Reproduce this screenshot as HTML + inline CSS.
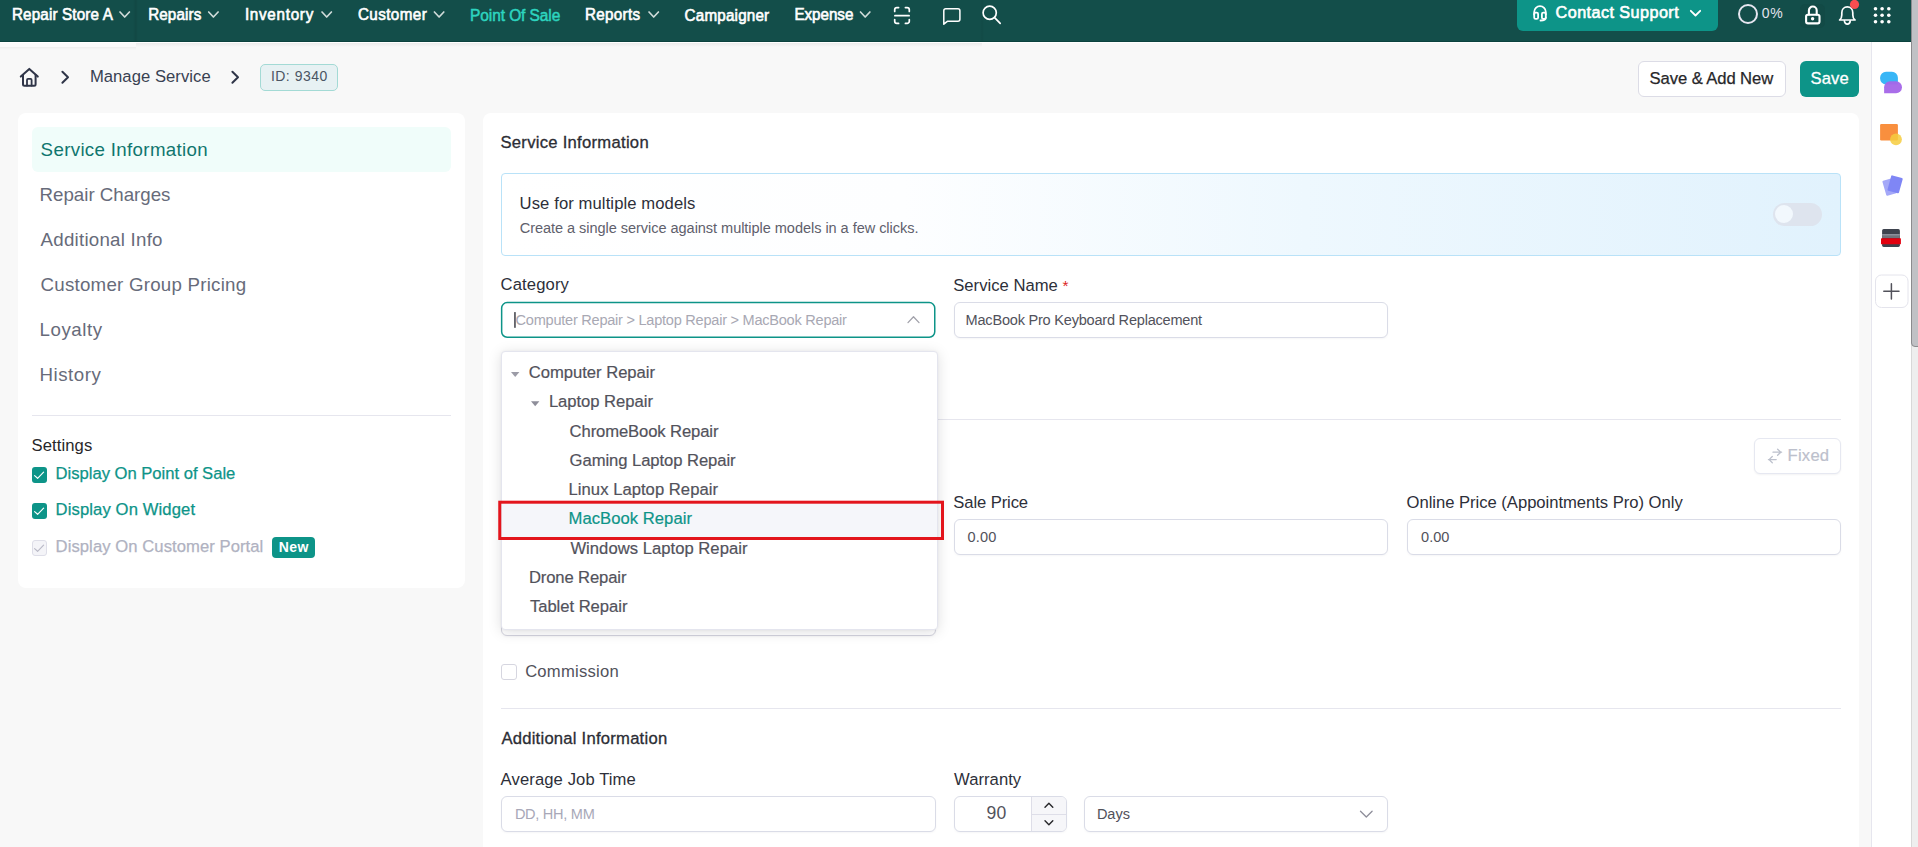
<!DOCTYPE html>
<html lang="en">
<head>
<meta charset="utf-8">
<title>Manage Service</title>
<style>
*{box-sizing:border-box;margin:0;padding:0}
html,body{width:1918px;height:847px;overflow:hidden;background:#f8f8f8;font-family:"Liberation Sans",sans-serif;}
body{position:relative}
.a{position:absolute}
.t{position:absolute;white-space:nowrap;line-height:20px;}
.nav{left:0;top:0;width:1911px;height:42px;background:#134e4a}
.cs{left:1517px;top:-6px;width:201px;height:37px;border-radius:6px;background:#0d9488}
.rp{left:1871px;top:42px;width:40px;height:805px;background:#fff;border-left:1px solid #e6e6ee}
.sbtrack{left:1911px;top:0;width:7px;height:847px;background:#eeeeee;border-left:1px solid #d8d8d8}
.sbthumb{left:1911px;top:-4px;width:11px;height:350.500px;background:#c0c1c5;border:1px solid #8b8b8e;border-radius:4px}
.card{background:#fff;border-radius:8px}
.inp{background:#fff;border:1px solid #dadce7;border-radius:6px;box-shadow:0 1px 2px rgba(24,24,40,.04)}
.hr{height:1px;background:#e6e6ee}
.cb{width:15px;height:16px;border-radius:3px}
</style>
</head>
<body>
<!-- top navigation -->
<div class="a nav"></div>
<div class="a" style="left:0;top:41px;width:1911px;height:1px;background:#0b423e"></div>
<div class="a" style="left:133px;top:0;width:5px;height:41px;background:linear-gradient(90deg,rgba(0,0,0,0),rgba(0,0,0,.08) 55%,rgba(0,0,0,0))"></div>
<div class="a" style="left:0;top:42px;width:1871px;height:1px;background:#fff"></div>
<div class="a" style="left:136px;top:43px;width:846px;height:4px;background:linear-gradient(180deg,rgba(0,0,0,.05),rgba(0,0,0,0))"></div>
<div class="a" style="left:980px;top:0;width:4px;height:41px;background:linear-gradient(90deg,rgba(0,0,0,0),rgba(0,0,0,.05) 50%,rgba(0,0,0,0))"></div>
<div class="a" style="left:0;top:43px;width:136px;height:4px;background:#fafafa"></div>
<div class="a" style="left:0;top:47px;width:136px;height:3px;background:linear-gradient(180deg,rgba(0,0,0,.045),rgba(0,0,0,0))"></div>
<div class="a cs"></div>
<svg class="a" style="left:0;top:0" width="1911" height="42" viewBox="0 0 1911 42" fill="none" stroke-linecap="round" stroke-linejoin="round">
  <!-- nav chevrons -->
  <g stroke="#cfdbd9" stroke-width="1.7">
    <path d="M120 12l4.7 5 4.7-5"/>
    <path d="M208.7 12l4.7 5 4.7-5"/>
    <path d="M322 12l4.7 5 4.7-5"/>
    <path d="M434.4 12l4.7 5 4.7-5"/>
    <path d="M649 12l4.7 5 4.7-5"/>
    <path d="M860.5 12l4.7 5 4.7-5"/>
  </g>
  <!-- scan icon -->
  <g stroke="#fff" stroke-width="1.7">
    <path d="M894.7 11.5v-1.7a2.2 2.2 0 0 1 2.2-2.2h1.7M905.4 7.6h1.7a2.2 2.2 0 0 1 2.2 2.2v1.7M909.3 19.5v1.7a2.2 2.2 0 0 1-2.2 2.2h-1.7M898.6 23.4h-1.7a2.2 2.2 0 0 1-2.2-2.2v-1.7M894.9 15.7h14.2"/>
  </g>
  <!-- chat icon -->
  <path d="M943.8 24.2V10.8a2 2 0 0 1 2-2h12.1a2 2 0 0 1 2 2v8.5a2 2 0 0 1-2 2h-10.6z" stroke="#fff" stroke-width="1.5"/>
  <!-- search icon -->
  <g stroke="#fff" stroke-width="1.7"><circle cx="989.7" cy="12.8" r="6.6"/><path d="M994.6 17.6l5.6 5.7"/></g>
  <!-- headset -->
  <g stroke="#fff" stroke-width="1.8">
    <path d="M1534.2 14.5v-2.6a5.8 5.8 0 0 1 11.6 0v2.6"/>
    <rect x="1534.2" y="12.6" width="3.9" height="6.2" rx="1.4"/>
    <rect x="1541.9" y="12.6" width="3.9" height="6.2" rx="1.4"/>
    <path d="M1545.8 17.5c0 2-1.8 3-5.3 3"/>
  </g>
  <!-- contact chevron -->
  <path d="M1690.8 10.8l4.7 4.7 4.7-4.7" stroke="#fff" stroke-width="1.8"/>
  <!-- progress circle -->
  <circle cx="1748" cy="14" r="9" stroke="#e6e6f0" stroke-width="2"/>
  <!-- lock -->
  <rect x="1800" y="4" width="25" height="24" rx="5" fill="#124a46" stroke="none"/>
  <g stroke="#fff" stroke-width="2.1">
    <rect x="1806.1" y="14.7" width="13.4" height="8.7" rx="1.8"/>
    <path d="M1808.9 14.5v-4.1a3.9 3.9 0 0 1 7.8 0v4.1"/>
  </g>
  <circle cx="1812.6" cy="18.8" r="1.7" fill="#fff"/>
  <!-- bell -->
  <g stroke="#fff" stroke-width="1.7">
    <path d="M1839.6 20h15.4c-1.5-1.1-2.2-2.5-2.2-5v-2.2c0-3.300-2.300-5.900-5.500-5.900s-5.500 2.600-5.500 5.900v2.200c0 2.500-.7 3.900-2.200 5z"/>
    <path d="M1844.400 20.800a2.900 3.300 0 0 0 5.800 0"/>
  </g>
  <circle cx="1854.500" cy="4.400" r="4.600" fill="#fa4d50"/>
  <!-- app grid -->
  <g fill="#fff">
    <circle cx="1875.500" cy="8.700" r="1.800"/><circle cx="1882.100" cy="8.700" r="1.800"/><circle cx="1888.800" cy="8.700" r="1.800"/>
    <circle cx="1875.500" cy="15.200" r="1.800"/><circle cx="1882.100" cy="15.200" r="1.800"/><circle cx="1888.800" cy="15.200" r="1.800"/>
    <circle cx="1875.500" cy="21.800" r="1.800"/><circle cx="1882.100" cy="21.800" r="1.800"/><circle cx="1888.800" cy="21.800" r="1.800"/>
  </g>
</svg>

<!-- right app rail -->
<div class="a rp"></div>
<svg class="a" style="left:1871px;top:42px" width="40" height="320" viewBox="1871 42 40 320" fill="none">
  <path d="M1886.100 71.800h5.800a6 6 0 0 1 6 6v6.600h-11.800a6 6 0 0 1-6-6v-.6a6 6 0 0 1 6-6z" fill="#38b6f6"/>
  <path d="M1884.100 87.300a6 6 0 0 1 6-6h5.900a6 6 0 0 1 6 6v0a6 6 0 0 1-6 6h-11.900z" fill="#a667e8" fill-opacity=".96"/>
  <rect x="1880.100" y="124" width="17.800" height="16.400" rx="1.200" fill="#f98f3e"/>
  <circle cx="1896" cy="139.300" r="5.900" fill="#f6cd3e" fill-opacity=".85"/>
  <rect x="1884.150" y="179.100" width="11" height="15.700" rx="1" fill="#a4a8f8" transform="rotate(-16 1889.650 186.950)"/>
  <rect x="1889.150" y="176.450" width="11.900" height="15.800" rx="1" fill="#7f86f5" transform="rotate(15.500 1895.100 184.350)"/>
  <rect x="1882.100" y="229.100" width="17.800" height="17.800" rx="1.600" fill="#3e434e"/>
  <rect x="1882.100" y="234.100" width="17.800" height="3.900" fill="#6f737c"/>
  <rect x="1882.100" y="234.100" width="17.800" height="1.300" fill="#9093a0"/>
  <rect x="1881" y="238.200" width="19.900" height="6.100" rx=".6" fill="#e2000f"/>
  <rect x="1875.500" y="275" width="32.500" height="32.500" rx="6" fill="#fff" stroke="#e4e4ec"/>
  <path d="M1883.800 291.300h15.200M1891.400 283.700v15.200" stroke="#52525b" stroke-width="1.500" stroke-linecap="round"/>
</svg>
<!-- page scrollbar -->
<div class="a sbtrack"></div>
<div class="a sbthumb"></div>

<!-- breadcrumb -->
<svg class="a" style="left:0;top:60px" width="360" height="40" viewBox="0 60 360 40" fill="none" stroke="#2f3548" stroke-width="2" stroke-linecap="round" stroke-linejoin="round">
  <path d="M20.800 76.600l8.500-7.700 8.500 7.700"/>
  <path d="M23 75v9.300a1.500 1.500 0 0 0 1.500 1.500h9.600a1.500 1.500 0 0 0 1.500-1.500V75"/>
  <path d="M27 85.500v-5.600a1 1 0 0 1 1-1h2.600a1 1 0 0 1 1 1v5.600" stroke-width="1.800"/>
  <path d="M62.400 71.800l5.600 5.500-5.600 5.500"/>
  <path d="M232.400 71.800l5.600 5.500-5.600 5.500"/>
</svg>
<div class="a" style="left:260px;top:64px;width:78px;height:27px;background:#e7f1f3;border:1px solid #a3dad5;border-radius:5px"></div>
<div class="a" style="left:1638px;top:61px;width:147.500px;height:35.500px;background:#fff;border:1px solid #dcdce6;border-radius:6px"></div>
<div class="a" style="left:1800px;top:61px;width:59px;height:36px;background:#0d9488;border-radius:6px"></div>

<!-- left sidebar card -->
<div class="a card" style="left:18px;top:113px;width:447px;height:474.500px"></div>
<div class="a" style="left:32px;top:127px;width:418.500px;height:44.500px;background:#f0fdfa;border-radius:6px"></div>
<div class="a hr" style="left:32px;top:415px;width:418.500px"></div>
<div class="a cb" style="left:32px;top:467px;background:#0d9488"></div>
<div class="a cb" style="left:32px;top:503px;background:#0d9488"></div>
<div class="a cb" style="left:32px;top:540px;background:#f4f4f8;border:1px solid #dedee8"></div>
<svg class="a" style="left:30px;top:465px" width="20" height="95" viewBox="30 465 20 95" fill="none" stroke-linecap="round" stroke-linejoin="round" stroke-width="1.150">
  <path d="M34.600 475.600l3 2.700 6-6.100" stroke="#fff"/>
  <path d="M34.600 511.600l3 2.700 6-6.100" stroke="#fff"/>
  <path d="M34.600 548.600l3 2.700 6-6.100" stroke="#b9b9c6"/>
</svg>
<div class="a" style="left:272px;top:537px;width:42.500px;height:20.500px;background:#0d9488;border-radius:4px"></div>

<!-- main card -->
<div class="a card" style="left:483px;top:113px;width:1376px;height:760px"></div>
<div class="a" style="left:501px;top:173px;width:1340px;height:82.500px;border:1px solid #b9e2f8;border-radius:4px;background:linear-gradient(90deg,#ffffff 0%,#fdfeff 30%,#eef8fe 60%,#e1f2fd 100%)"></div>
<div class="a" style="left:1773px;top:203px;width:49px;height:23px;border-radius:12px;background:#dee4ee"></div>
<div class="a" style="left:1774.800px;top:204.800px;width:18.500px;height:18.500px;border-radius:50%;background:#f2f8fd"></div>

<!-- category select (focused) -->
<svg class="a" style="left:495px;top:296px" width="448" height="48" viewBox="495 296 448 48" fill="none"><rect x="501.650" y="302.550" width="433.100" height="34.700" rx="5.500" fill="#fff" stroke="#0d9488" stroke-width="1.500"/><rect x="514.200" y="312.100" width="1.500" height="15.700" fill="#3f3f46"/></svg>
<svg class="a" style="left:900px;top:310px" width="30" height="20" viewBox="900 310 30 20" fill="none" stroke="#a1a1aa" stroke-width="1.300" stroke-linecap="round" stroke-linejoin="round"><path d="M908 322.600l5.500-5.800 5.500 5.800"/></svg>
<!-- service name -->
<div class="a inp" style="left:954px;top:302px;width:433.500px;height:36px"></div>

<!-- section divider -->
<div class="a hr" style="left:501px;top:419px;width:1340px"></div>
<!-- Fixed button -->
<div class="a" style="left:1754px;top:438px;width:87px;height:35.500px;background:#fff;border:1px solid #e6e8f1;border-radius:6px;box-shadow:0 1px 2px rgba(24,24,40,.05)"></div>
<svg class="a" style="left:1764px;top:445px" width="22" height="22" viewBox="1764 445 22 22" fill="none" stroke="#bcc0cc" stroke-width="1.300" stroke-linecap="round" stroke-linejoin="round">
  <path d="M1773 452.200h8.600M1777.600 449.200l3.200 3-3.200 3.100"/>
  <path d="M1776.200 459.600h-7.800M1772.300 456.500l-3.200 3.100 3.200 3.100"/>
</svg>
<!-- price inputs -->
<div class="a inp" style="left:954px;top:519px;width:433.500px;height:35.500px"></div>
<div class="a inp" style="left:1406.500px;top:519px;width:434px;height:35.500px"></div>
<!-- hidden input under dropdown -->
<div class="a inp" style="left:501px;top:599.500px;width:434.500px;height:36px;border-color:#d3d3de"></div>

<!-- dropdown panel -->
<div class="a" style="left:501px;top:351px;width:437px;height:278.500px;background:#fff;border:1px solid #e4e5ee;border-radius:4px;box-shadow:0 2px 14px rgba(10,10,20,.13),0 0 3px rgba(10,10,20,.05)"></div>
<div class="a" style="left:502px;top:503px;width:435px;height:35px;background:#f5f6fa"></div>
<svg class="a" style="left:505px;top:365px" width="40" height="50" viewBox="505 365 40 50"><path d="M511 372h8.400l-4.200 4.900z" fill="#9c9ca7"/><path d="M531 401.300h8.400l-4.200 4.900z" fill="#8e8e9a"/></svg>
<!-- red highlight annotation -->
<svg class="a" style="left:490px;top:495px" width="460" height="50" viewBox="490 495 460 50" fill="none"><rect x="499.750" y="502.200" width="442.750" height="36.300" stroke="#e3151c" stroke-width="3"/></svg>

<!-- commission -->
<div class="a cb" style="left:501px;top:664px;width:16px;height:16px;background:#fff;border:1px solid #d6d6e0"></div>
<div class="a hr" style="left:501px;top:708px;width:1340px"></div>
<!-- bottom inputs -->
<div class="a inp" style="left:501px;top:796px;width:434.500px;height:35.750px"></div>
<div class="a inp" style="left:954px;top:796px;width:113px;height:35.750px;overflow:hidden"><div class="a" style="left:76px;top:0;width:36px;height:34px;background:#f6f6f9;border-left:1px solid #dedee8"></div><div class="a" style="left:76px;top:16.800px;width:36px;height:1px;background:#dedee8"></div></div>
<svg class="a" style="left:1040px;top:798px" width="20" height="32" viewBox="1040 798 20 32" fill="none" stroke="#27272a" stroke-width="1.400" stroke-linecap="round" stroke-linejoin="round"><path d="M1045 807.200l3.900-4 3.900 4M1045 820.800l3.900 4 3.900-4"/></svg>
<div class="a inp" style="left:1084px;top:796px;width:303.500px;height:35.750px"></div>
<svg class="a" style="left:1355px;top:805px" width="24" height="18" viewBox="1355 805 24 18" fill="none" stroke="#8e8e9a" stroke-width="1.300" stroke-linecap="round" stroke-linejoin="round"><path d="M1360.500 811.200l5.800 5.800 5.800-5.800"/></svg>

<span class="t" style="left:11.9px;top:6px;line-height:17px;font-size:15.2px;color:#ffffff;letter-spacing:0.171px;transform:scaleY(1.04);transform-origin:0 14px;-webkit-text-stroke:0.6px #fff;">Repair Store A</span>
<span class="t" style="left:148.15px;top:6px;line-height:17px;font-size:15.2px;color:#ffffff;letter-spacing:0.127px;transform:scaleY(1.04);transform-origin:0 14px;-webkit-text-stroke:0.6px #fff;">Repairs</span>
<span class="t" style="left:244.9px;top:6px;line-height:17px;font-size:15.2px;color:#ffffff;letter-spacing:0.734px;transform:scaleY(1.04);transform-origin:0 14px;-webkit-text-stroke:0.6px #fff;">Inventory</span>
<span class="t" style="left:357.9px;top:6px;line-height:17px;font-size:15.2px;color:#ffffff;letter-spacing:0.425px;transform:scaleY(1.04);transform-origin:0 14px;-webkit-text-stroke:0.6px #fff;">Customer</span>
<span class="t" style="left:470.05px;top:7px;line-height:17px;font-size:15.5px;color:#2dd4bf;letter-spacing:-0.088px;transform:scaleY(1.03);transform-origin:0 14px;-webkit-text-stroke:0.5px #2dd4bf;">Point Of Sale</span>
<span class="t" style="left:585.05px;top:6px;line-height:17px;font-size:15.2px;color:#ffffff;letter-spacing:0.294px;transform:scaleY(1.04);transform-origin:0 14px;-webkit-text-stroke:0.6px #fff;">Reports</span>
<span class="t" style="left:684.6px;top:7px;line-height:17px;font-size:15.2px;color:#ffffff;letter-spacing:0.203px;transform:scaleY(1.04);transform-origin:0 14px;-webkit-text-stroke:0.6px #fff;">Campaigner</span>
<span class="t" style="left:794.4px;top:6px;line-height:17px;font-size:15.2px;color:#ffffff;letter-spacing:-0.026px;transform:scaleY(1.04);transform-origin:0 14px;-webkit-text-stroke:0.6px #fff;">Expense</span>
<span class="t" style="left:1555.6px;top:3px;line-height:18px;font-size:16.2px;color:#ffffff;letter-spacing:0.437px;transform:scaleY(1.03);transform-origin:0 15px;-webkit-text-stroke:0.6px #fff;">Contact Support</span>
<span class="t" style="left:1761.84px;top:5px;line-height:16px;font-size:14px;color:#e4e4ee;letter-spacing:0.564px;">0%</span>
<span class="t" style="left:89.9px;top:67px;line-height:19px;font-size:16.64px;color:#384152;letter-spacing:0.047px;">Manage Service</span>
<span class="t" style="left:270.9px;top:68px;line-height:16px;font-size:14px;color:#4b5563;letter-spacing:0.489px;">ID: 9340</span>
<span class="t" style="left:1649.6px;top:69px;line-height:19px;font-size:16.64px;color:#27272a;letter-spacing:-0.09px;-webkit-text-stroke:0.25px #27272a;">Save &amp; Add New</span>
<span class="t" style="left:1810.6px;top:69px;line-height:19px;font-size:16.64px;color:#ffffff;letter-spacing:0.051px;-webkit-text-stroke:0.3px #fff;">Save</span>
<span class="t" style="left:40.6px;top:139px;line-height:21px;font-size:18.72px;color:#0f766e;letter-spacing:0.332px;">Service Information</span>
<span class="t" style="left:39.6px;top:184px;line-height:21px;font-size:18.72px;color:#676b7a;letter-spacing:-0.01px;">Repair Charges</span>
<span class="t" style="left:40.6px;top:229px;line-height:21px;font-size:18.72px;color:#676b7a;letter-spacing:0.24px;">Additional Info</span>
<span class="t" style="left:40.6px;top:274px;line-height:21px;font-size:18.72px;color:#676b7a;letter-spacing:0.232px;">Customer Group Pricing</span>
<span class="t" style="left:39.6px;top:319px;line-height:21px;font-size:18.72px;color:#676b7a;letter-spacing:0.525px;">Loyalty</span>
<span class="t" style="left:39.6px;top:364px;line-height:21px;font-size:18.72px;color:#676b7a;letter-spacing:0.493px;">History</span>
<span class="t" style="left:31.6px;top:436px;line-height:19px;font-size:16.64px;color:#27272a;letter-spacing:0.085px;">Settings</span>
<span class="t" style="left:55.6px;top:464px;line-height:19px;font-size:16.64px;color:#0d9488;letter-spacing:-0.02px;-webkit-text-stroke:0.25px #0d9488;">Display On Point of Sale</span>
<span class="t" style="left:55.6px;top:500px;line-height:19px;font-size:16.64px;color:#0d9488;letter-spacing:0.109px;-webkit-text-stroke:0.25px #0d9488;">Display On Widget</span>
<span class="t" style="left:55.6px;top:537px;line-height:19px;font-size:16.64px;color:#b0b2c1;letter-spacing:0.066px;-webkit-text-stroke:0.25px #b0b2c1;">Display On Customer Portal</span>
<span class="t" style="left:278.7px;top:539px;line-height:16px;font-size:14px;color:#ffffff;font-weight:700;letter-spacing:0.402px;">New</span>
<span class="t" style="left:500.45px;top:133px;line-height:19px;font-size:16.64px;color:#2d2f39;letter-spacing:0.276px;-webkit-text-stroke:0.3px #27272a;">Service Information</span>
<span class="t" style="left:519.6px;top:194px;line-height:19px;font-size:16.64px;color:#2d2f39;letter-spacing:0.096px;">Use for multiple models</span>
<span class="t" style="left:519.7px;top:220px;line-height:16px;font-size:14.56px;color:#60606c;letter-spacing:-0.049px;">Create a single service against multiple models in a few clicks.</span>
<span class="t" style="left:500.6px;top:275px;line-height:19px;font-size:16.64px;color:#2d2f39;letter-spacing:0.115px;">Category</span>
<span class="t" style="left:515.6px;top:312px;line-height:16px;font-size:14.56px;color:#a8a8b3;letter-spacing:-0.245px;">Computer Repair &gt; Laptop Repair &gt; MacBook Repair</span>
<span class="t" style="left:953.25px;top:276px;line-height:19px;font-size:16.64px;color:#2d2f39;letter-spacing:0.009px;">Service Name</span>
<span class="t" style="left:1062.58px;top:277px;line-height:17px;font-size:15.5px;color:#dc2626;">*</span>
<span class="t" style="left:965.6px;top:312px;line-height:16px;font-size:14.56px;color:#52525b;letter-spacing:-0.221px;">MacBook Pro Keyboard Replacement</span>
<span class="t" style="left:528.7px;top:363px;line-height:19px;font-size:16.64px;color:#52525b;letter-spacing:-0.018px;-webkit-text-stroke:0.2px #52525b;">Computer Repair</span>
<span class="t" style="left:548.9px;top:392px;line-height:19px;font-size:16.64px;color:#52525b;letter-spacing:-0.034px;-webkit-text-stroke:0.2px #52525b;">Laptop Repair</span>
<span class="t" style="left:569.6px;top:422px;line-height:19px;font-size:16.64px;color:#52525b;letter-spacing:-0.108px;-webkit-text-stroke:0.2px #52525b;">ChromeBook Repair</span>
<span class="t" style="left:569.6px;top:451px;line-height:19px;font-size:16.64px;color:#52525b;letter-spacing:-0.065px;-webkit-text-stroke:0.2px #52525b;">Gaming Laptop Repair</span>
<span class="t" style="left:568.6px;top:480px;line-height:19px;font-size:16.64px;color:#52525b;letter-spacing:0.03px;-webkit-text-stroke:0.2px #52525b;">Linux Laptop Repair</span>
<span class="t" style="left:568.6px;top:509px;line-height:19px;font-size:16.64px;color:#0d9488;letter-spacing:0.034px;-webkit-text-stroke:0.2px #0d9488;">MacBook Repair</span>
<span class="t" style="left:570.4px;top:539px;line-height:19px;font-size:16.64px;color:#52525b;letter-spacing:0.027px;-webkit-text-stroke:0.2px #52525b;">Windows Laptop Repair</span>
<span class="t" style="left:528.9px;top:568px;line-height:19px;font-size:16.64px;color:#52525b;letter-spacing:-0.122px;-webkit-text-stroke:0.2px #52525b;">Drone Repair</span>
<span class="t" style="left:529.9px;top:597px;line-height:19px;font-size:16.64px;color:#52525b;letter-spacing:-0.035px;-webkit-text-stroke:0.2px #52525b;">Tablet Repair</span>
<span class="t" style="left:1787.6px;top:446px;line-height:19px;font-size:16.64px;color:#bcc0cc;letter-spacing:0.211px;-webkit-text-stroke:0.2px #bcc0cc;">Fixed</span>
<span class="t" style="left:953.34px;top:493px;line-height:19px;font-size:16.64px;color:#2d2f39;letter-spacing:-0.112px;">Sale Price</span>
<span class="t" style="left:1406.6px;top:493px;line-height:19px;font-size:16.64px;color:#2d2f39;letter-spacing:-0.031px;">Online Price (Appointments Pro) Only</span>
<span class="t" style="left:967.6px;top:529px;line-height:16px;font-size:14.56px;color:#52525b;letter-spacing:0.186px;">0.00</span>
<span class="t" style="left:1421.05px;top:529px;line-height:16px;font-size:14.56px;color:#52525b;letter-spacing:0.009px;">0.00</span>
<span class="t" style="left:525.15px;top:662px;line-height:19px;font-size:16.64px;color:#52525b;letter-spacing:0.227px;">Commission</span>
<span class="t" style="left:501.4px;top:729px;line-height:19px;font-size:16.64px;color:#2d2f39;letter-spacing:0.235px;-webkit-text-stroke:0.3px #27272a;">Additional Information</span>
<span class="t" style="left:500.6px;top:770px;line-height:19px;font-size:16.64px;color:#2d2f39;letter-spacing:0.1px;">Average Job Time</span>
<span class="t" style="left:514.9px;top:806px;line-height:16px;font-size:14.56px;color:#a8a8b8;letter-spacing:-0.284px;">DD, HH, MM</span>
<span class="t" style="left:954.05px;top:770px;line-height:19px;font-size:16.64px;color:#2d2f39;letter-spacing:0.042px;">Warranty</span>
<span class="t" style="left:986.6px;top:803px;line-height:20px;font-size:17.58px;color:#52525b;letter-spacing:0.174px;">90</span>
<span class="t" style="left:1096.9px;top:806px;line-height:16px;font-size:14.56px;color:#52525b;letter-spacing:-0.04px;">Days</span>
</body>
</html>
